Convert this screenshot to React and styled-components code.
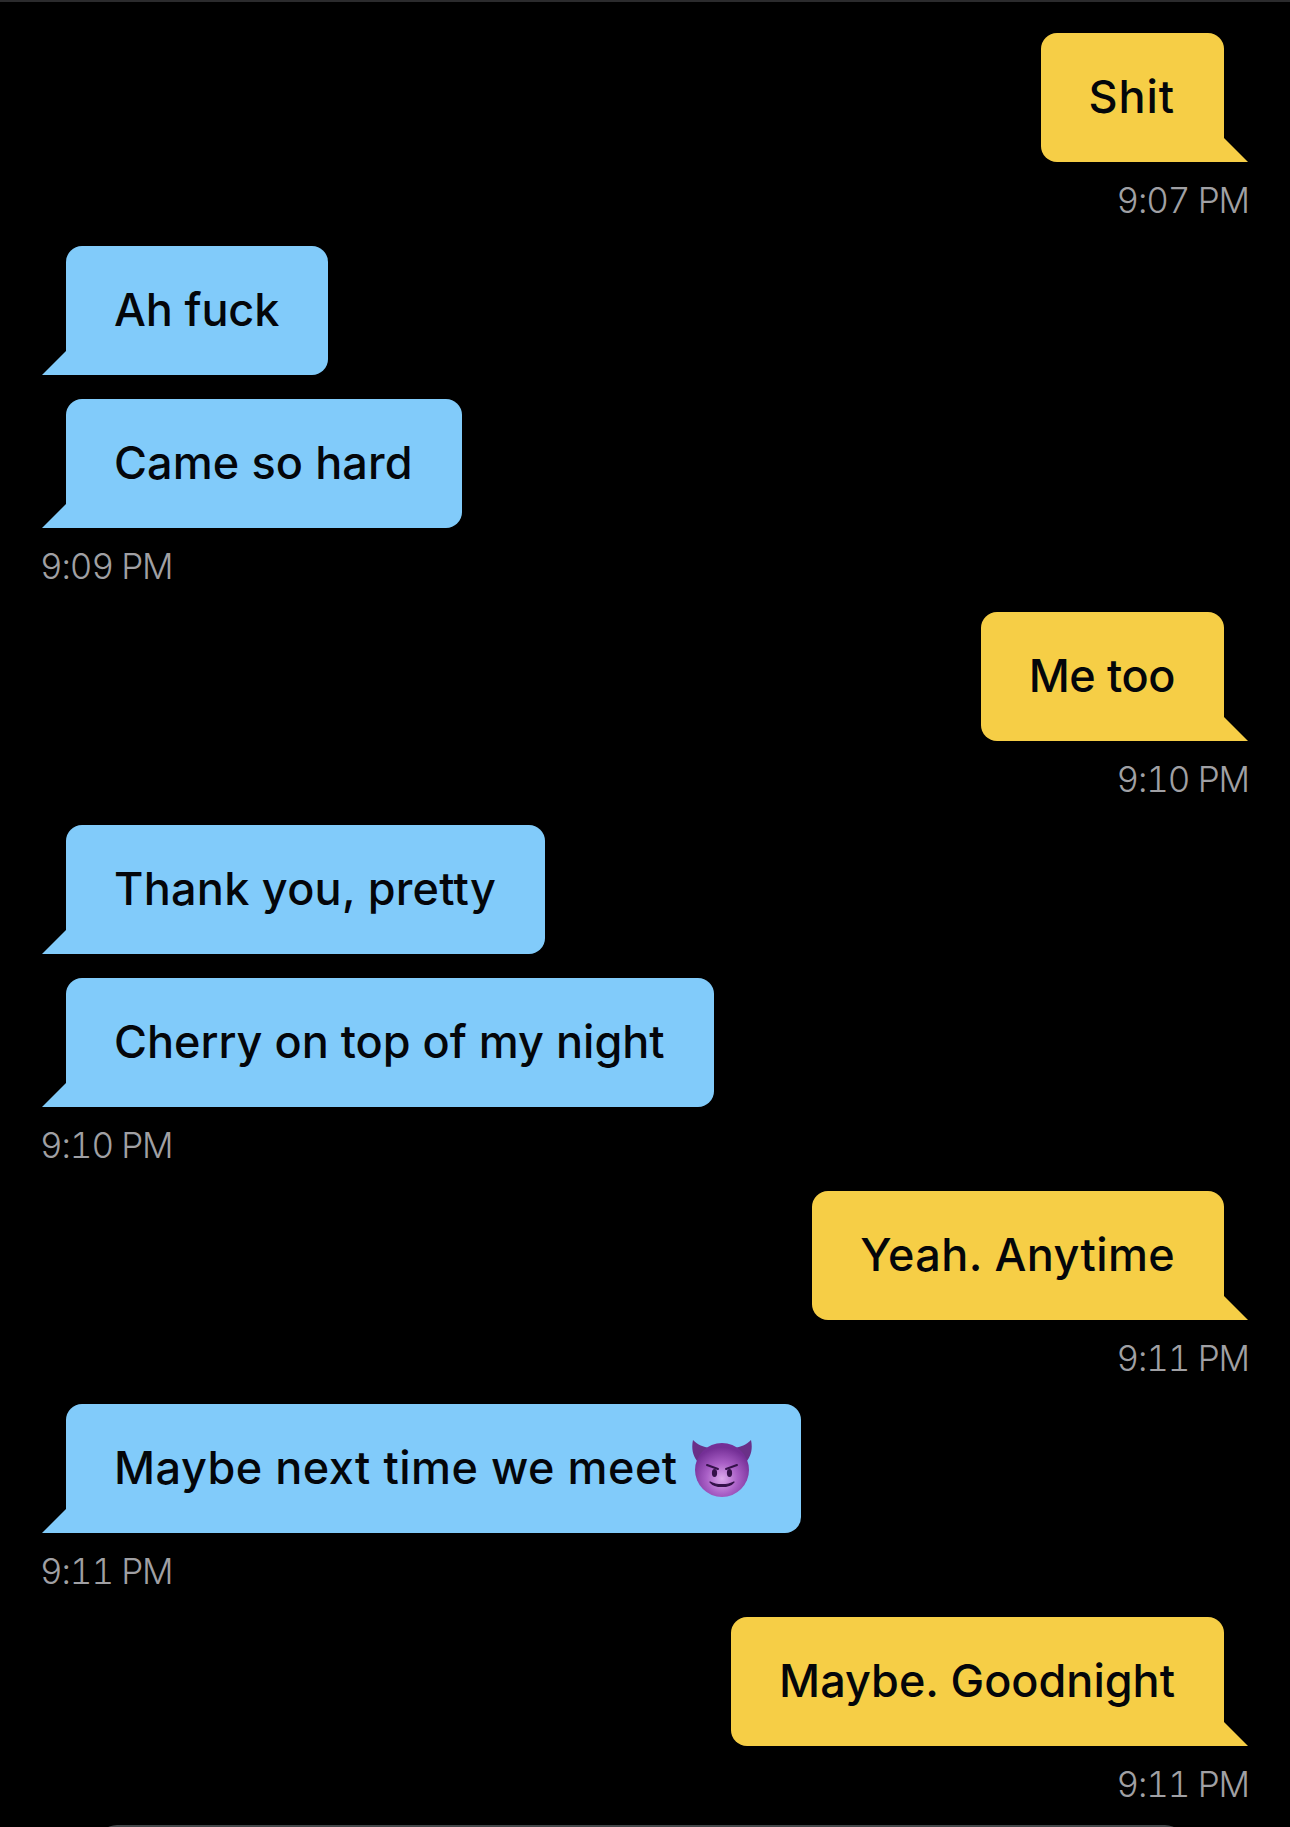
import React from 'react';
import styled, { createGlobalStyle } from 'styled-components';

const Global = createGlobalStyle`
  html, body {
    margin: 0;
    padding: 0;
    background: #000;
  }
  body {
    font-family: Inter, "Noto Sans", "Liberation Sans", sans-serif;
  }
`;

const Screen = styled.div`
  width: 1290px;
  height: 1827px;
  box-sizing: border-box;
  overflow: hidden;
  background: #000;
  border-top: 2px solid #2b2b2d;
  padding: 31px 42px 0;
  display: flex;
  flex-direction: column;
`;

const Thread = styled.div`
  display: flex;
  flex-direction: column;
  gap: 24px;
`;

const Group = styled.div`
  display: flex;
  flex-direction: column;
  gap: 24px;
  align-items: ${(p) => (p.$mine ? 'flex-end' : 'flex-start')};
`;

const Bubble = styled.div`
  position: relative;
  box-sizing: border-box;
  height: 129px;
  display: flex;
  align-items: center;
  margin: ${(p) => (p.$mine ? '0 24px 0 0' : '0 0 0 24px')};
  padding: 0 49px 2px 48px;
  border-radius: ${(p) => (p.$mine ? '16px 16px 0 16px' : '16px 16px 16px 0')};
  background: ${(p) => (p.$mine ? '#f6ce46' : '#81cbfa')};
  color: #04060a;
  font-size: 45px;
  font-weight: 500;
  letter-spacing: ${(p) => p.$track || 0}px;
  white-space: nowrap;

  &::after {
    content: '';
    position: absolute;
    bottom: 0;
    width: 24px;
    height: 24px;
    background: inherit;
    ${(p) =>
      p.$mine
        ? 'left: 100%; clip-path: polygon(0 0, 100% 100%, 0 100%);'
        : 'right: 100%; clip-path: polygon(100% 0, 100% 100%, 0 100%);'}
  }
`;

const Time = styled.div`
  height: 60px;
  margin: -24px -1px 0 -2px;
  padding-top: 16px;
  box-sizing: border-box;
  line-height: 44px;
  font-size: 35px;
  font-weight: 300;
  font-variant-numeric: tabular-nums;
  letter-spacing: -1.1px;
  color: #a0a0a4;
  white-space: nowrap;
`;

const Emoji = styled.svg`
  width: 60px;
  height: 58px;
  margin: 2px 0 0 14px;
  flex: none;
`;

const Composer = styled.div`
  width: 1088px;
  height: 20px;
  flex: none;
  margin: 19px 0 0 55px;
  border-radius: 20px 20px 0 0;
  background: #44484b;
`;

const DevilEmoji = () => (
  <Emoji viewBox="0 0 60 58">
    <defs>
      <radialGradient id="devilFace" cx="50%" cy="66%" r="58%">
        <stop offset="0" stopColor="#dcaaec" />
        <stop offset="0.5" stopColor="#a95fc6" />
        <stop offset="1" stopColor="#742f96" />
      </radialGradient>
    </defs>
    <path d="M1 0 C-1 9 1 18 8 24 L18 8 C11 7 6 5 1 0Z" fill="#6a3088" />
    <path d="M59 0 C61 9 59 18 52 24 L42 8 C49 7 54 5 59 0Z" fill="#6a3088" />
    <circle cx="30" cy="30" r="27" fill="url(#devilFace)" />
    <path d="M15 25 L26 29" stroke="#35124a" strokeWidth="2" strokeLinecap="round" />
    <path d="M45 25 L34 29" stroke="#35124a" strokeWidth="2" strokeLinecap="round" />
    <ellipse cx="22.5" cy="33" rx="2.6" ry="4" fill="#35124a" />
    <ellipse cx="37.5" cy="33" rx="2.6" ry="4" fill="#35124a" />
    <path d="M18 42 C23 48 37 48 42 42 C36 45.5 24 45.5 18 42Z" fill="#35124a" stroke="#35124a" strokeWidth="1.2" strokeLinejoin="round" />
  </Emoji>
);

// track makes up for the difference in letter widths per line
const groups = [
  { mine: true, lines: [{ text: 'Shit', track: 0.9 }], time: '9:07 PM' },
  {
    mine: false,
    lines: [
      { text: 'Ah fuck', track: -0.15 },
      { text: 'Came so hard', track: 0.1 },
    ],
    time: '9:09 PM',
  },
  { mine: true, lines: [{ text: 'Me too', track: -0.4 }], time: '9:10 PM' },
  {
    mine: false,
    lines: [{ text: 'Thank you, pretty', track: 0.27 }, { text: 'Cherry on top of my night' }],
    time: '9:10 PM',
  },
  { mine: true, lines: [{ text: 'Yeah. Anytime', track: 0.36 }], time: '9:11 PM' },
  { mine: false, lines: [{ text: 'Maybe next time we meet', track: 0.5 }], emoji: true, time: '9:11 PM' },
  { mine: true, lines: [{ text: 'Maybe. Goodnight' }], time: '9:11 PM' },
];

const App = () => (
  <>
    <Global />
    <Screen>
      <Thread>
        {groups.map((group, i) => (
          <Group key={i} $mine={group.mine}>
            {group.lines.map((line) => (
              <Bubble key={line.text} $mine={group.mine} $track={line.track}>
                {line.text}
                {group.emoji && <DevilEmoji />}
              </Bubble>
            ))}
            <Time>{group.time}</Time>
          </Group>
        ))}
      </Thread>
      <Composer />
    </Screen>
  </>
);

export default App;
